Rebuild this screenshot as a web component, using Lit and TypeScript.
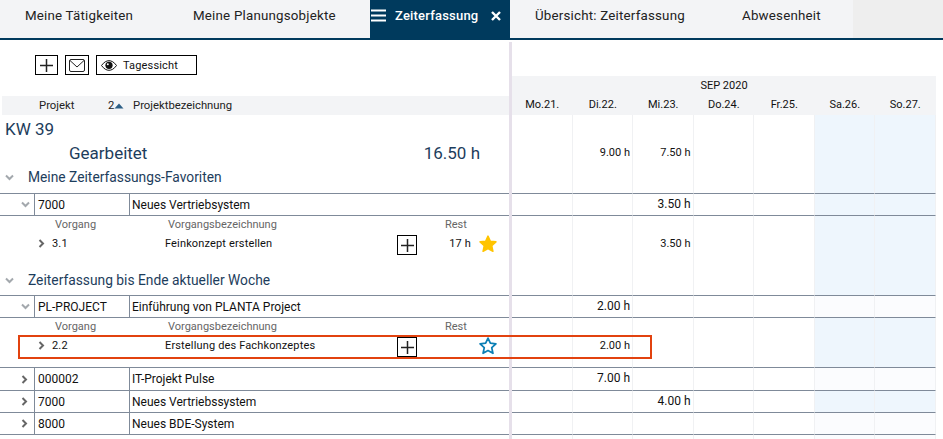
import { LitElement, html, css, svg, nothing } from "lit";
import { customElement } from "lit/decorators.js";
import { classMap } from "lit/directives/class-map.js";

type Row = {
  t: string;
  label?: string;
  code?: string;
  name?: string;
  open?: boolean;
  top?: boolean;
  tall?: boolean;
  pale?: boolean;
  rest?: string;
  star?: "full" | "empty";
  marked?: boolean;
  hours?: Record<number, string>;
};

const TABS = ["Meine Tätigkeiten", "Meine Planungsobjekte", "Zeiterfassung", "Übersicht: Zeiterfassung", "Abwesenheit"];
const DAYS = ["Mo.21.", "Di.22.", "Mi.23.", "Do.24.", "Fr.25.", "Sa.26.", "So.27."];

const ROWS: Row[] = [
  { t: "kw", label: "KW 39" },
  { t: "worked", hours: { 1: "9.00 h", 2: "7.50 h" } },
  { t: "group", label: "Meine Zeiterfassungs-Favoriten" },
  { t: "project", code: "7000", name: "Neues Vertriebsystem", open: true, top: true, hours: { 2: "3.50 h" } },
  { t: "sub" },
  { t: "task", code: "3.1", name: "Feinkonzept erstellen", rest: "17 h", star: "full", hours: { 2: "3.50 h" } },
  { t: "gap-lg" },
  { t: "group", top: true, label: "Zeiterfassung bis Ende aktueller Woche" },
  { t: "project", code: "PL-PROJECT", name: "Einführung von PLANTA Project", open: true, top: true, pale: true, hours: { 1: "2.00 h" } },
  { t: "sub" },
  { t: "task", code: "2.2", name: "Erstellung des Fachkonzeptes", star: "empty", marked: true, hours: { 1: "2.00 h" } },
  { t: "gap-sm" },
  { t: "project", code: "000002", name: "IT-Projekt Pulse", top: true, tall: true, pale: true, hours: { 1: "7.00 h" } },
  { t: "project", code: "7000", name: "Neues Vertriebssystem", hours: { 2: "4.00 h" } },
  { t: "project", code: "8000", name: "Neues BDE-System", pale: true },
];

const chevronDown = svg`<path d="M1 1.5 4.5 5 8 1.5" fill="none" stroke="#a3a8ad" stroke-width="2"/>`;
const chevronRight = svg`<path d="M1.5 1 5 4.5 1.5 8" fill="none" stroke="#666" stroke-width="2"/>`;
const STAR = "M9 1.6 11.2 6.4 16.4 7 12.5 10.6 13.6 15.8 9 13.2 4.4 15.8 5.5 10.6 1.6 7 6.8 6.4Z";

@customElement("app-root")
export class AppRoot extends LitElement {
  static styles = css`
    :host {
      display: block;
      width: 943px;
      height: 439px;
      overflow: hidden;
      background: #fff;
      font-family: Roboto, "Liberation Sans", sans-serif;
      color: #111;
    }
    .tabs {
      display: grid;
      grid-template-columns: 168px 202px 140px 207px 136px 1fr;
      height: 38px;
      border-bottom: 2px solid #003a5d;
      background: #eeeeee;
    }
    .tab {
      display: flex;
      align-items: center;
      padding: 0 0 7px 25px;
      background: #f3f4f6;
      color: #222;
      font-size: 13.33px;
      letter-spacing: 0.2px;
    }
    .tab.active {
      padding-left: 1px;
      background: #003a5d;
      color: #fff;
      font-size: 13px;
      font-weight: 500;
    }
    .tab.active span {
      margin: 0 13px 0 9px;
    }
    .panes {
      display: flex;
      height: 399px;
    }
    .left {
      position: relative;
      width: 509px;
      flex: none;
    }
    .split {
      width: 3px;
      margin-top: 2px;
      flex: none;
      background: #e6e0ea;
    }
    .right {
      width: 424px;
      flex: none;
      display: flex;
      flex-direction: column;
    }
    .toolbar {
      display: flex;
      align-items: flex-start;
      gap: 7px;
      height: 56px;
      padding: 15px 0 0 35px;
      box-sizing: border-box;
    }
    .box {
      display: flex;
      align-items: center;
      justify-content: center;
      box-sizing: border-box;
      border: 1px solid #000;
      background: #fff;
    }
    .toolbar .plus {
      width: 23px;
      height: 20px;
    }
    .toolbar .mail {
      width: 24px;
      height: 20px;
    }
    .toolbar .view {
      justify-content: flex-start;
      width: 101px;
      height: 20px;
      padding-left: 4px;
      gap: 6px;
      font-size: 11px;
      letter-spacing: 0.15px;
    }
    .head {
      display: flex;
      align-items: center;
      height: 19px;
      margin-left: 2px;
      background: #f3f4f6;
      font-size: 11.3px;
      color: #222;
    }
    .head .code {
      width: 69px;
      padding-left: 37px;
      box-sizing: content-box;
    }
    .head .sort {
      display: flex;
      align-items: center;
      width: 25px;
    }
    .month {
      height: 20px;
      margin-top: 36px;
      padding-top: 3px;
      box-sizing: border-box;
      background: #f3f4f6;
      text-align: center;
      font-size: 11px;
    }
    .days {
      display: grid;
      grid-template-columns: repeat(7, 60.5px);
      height: 19px;
      background: #f3f4f6;
      font-size: 11px;
      text-align: center;
      line-height: 17px;
    }

    .kw { height: 27px; }
    .worked { height: 25px; }
    .group { height: 26px; }
    .group.top { height: 25px; }
    .sub { height: 18px; }
    .task { height: 22px; }
    .gap-lg { height: 14px; }
    .gap-sm { height: 9px; }
    .project {
      height: 22px;
      box-sizing: border-box;
      border-bottom: 1px solid #7f8a99;
    }
    .project.top {
      height: 23px;
      border-top: 1px solid #7f8a99;
    }
    .project.tall {
      height: 24px;
    }

    .l {
      position: relative;
    }
    .l.kw {
      padding-left: 5px;
      font-size: 17px;
      line-height: 29px;
      color: #1d3d5c;
    }
    .l.worked {
      display: flex;
      justify-content: space-between;
      padding: 0 29px 0 69px;
      font-size: 17px;
      line-height: 22px;
      color: #1d3d5c;
    }
    .l.group {
      display: flex;
      align-items: flex-start;
      font-size: 13.8px;
      line-height: 21px;
      color: #1d3d5c;
    }
    .l.group svg {
      margin: 7px 14px 0 5px;
    }
    .l.project {
      display: grid;
      grid-template-columns: 21px 13px 95px 1fr;
      align-items: center;
      font-size: 12px;
    }
    .cell-code {
      align-self: stretch;
      display: flex;
      align-items: center;
      padding-left: 3px;
      border-left: 1px solid #7f8a99;
      border-right: 1px solid #7f8a99;
      margin-right: -1px;
    }
    .cell-name {
      padding-left: 3px;
    }
    .l.sub {
      display: grid;
      grid-template-columns: 55px 113px 277px 1fr;
      font-size: 11px;
      line-height: 17px;
      color: #666;
    }
    .l.task {
      display: grid;
      grid-template-columns: 38px 14px 113px 232px 20px 54px 8px 18px;
      align-items: start;
      font-size: 11px;
      line-height: 19px;
      letter-spacing: 0.15px;
    }
    .l.task > svg:first-child {
      grid-column: 2;
      margin-top: 5px;
    }
    .l.task .plus {
      width: 20px;
      height: 20px;
      margin-top: 1px;
    }
    .l.task .rest {
      text-align: right;
    }
    .l.task .star {
      grid-column: 8;
      margin-top: 1px;
    }
    .marker {
      position: absolute;
      left: 18px;
      top: -1px;
      width: 634px;
      height: 24px;
      box-sizing: border-box;
      border: 2px solid #e2420f;
      z-index: 2;
      pointer-events: none;
    }

    .r {
      display: grid;
      grid-template-columns: repeat(7, 60.5px);
    }
    .r.fill {
      flex: 1;
    }
    .c {
      box-sizing: border-box;
      border-right: 1px solid #f0f1f3;
      padding-right: 2px;
      text-align: right;
      font-size: 11px;
    }
    .r.task .c {
      line-height: 19px;
    }
    .r.worked .c {
      line-height: 22px;
    }
    .r.project .c {
      height: inherit;
      border-bottom: 1px solid #7f8a99;
      font-size: 12px;
      line-height: 20px;
    }
    .r.project.top .c {
      border-top: 1px solid #7f8a99;
    }
    .r.project {
      border: 0;
    }
    .c.we {
      background: #eef6fd;
    }
    .r.pale .c.we {
      background: #fbfcfe;
    }
  `;

  private plusIcon() {
    return html`<svg width="13" height="13" viewBox="0 0 13 13"><path d="M6.5 0v13M0 6.5h13" stroke="#222" stroke-width="1.5" fill="none"/></svg>`;
  }

  private leftRow(r: Row) {
    const cls = { l: true, [r.t]: true, top: !!r.top, tall: !!r.tall };
    if (r.t === "kw") return html`<div class=${classMap(cls)}>${r.label}</div>`;
    if (r.t === "worked") return html`<div class=${classMap(cls)}><span>Gearbeitet</span><span>16.50 h</span></div>`;
    if (r.t === "group")
      return html`<div class=${classMap(cls)}>
        <svg width="9" height="7" viewBox="0 0 9 7">${chevronDown}</svg>
        <span>${r.label}</span>
      </div>`;
    if (r.t === "project")
      return html`<div class=${classMap(cls)}>
        <span></span>
        ${r.open
          ? html`<svg width="9" height="7" viewBox="0 0 9 7">${chevronDown}</svg>`
          : html`<svg width="7" height="9" viewBox="0 0 7 9">${chevronRight}</svg>`}
        <div class="cell-code">${r.code}</div>
        <div class="cell-name">${r.name}</div>
      </div>`;
    if (r.t === "sub")
      return html`<div class=${classMap(cls)}><span></span><span>Vorgang</span><span>Vorgangsbezeichnung</span><span>Rest</span></div>`;
    if (r.t === "task")
      return html`<div class=${classMap(cls)}>
        <svg width="7" height="9" viewBox="0 0 7 9">${chevronRight}</svg>
        <span>${r.code}</span>
        <span>${r.name}</span>
        <div class="box plus">${this.plusIcon()}</div>
        <span class="rest">${r.rest ?? ""}</span>
        <svg class="star" width="18" height="18" viewBox="0.6 0.6 16.8 16.8">
          ${r.star === "full"
            ? svg`<path d=${STAR} fill="#ffc400" stroke="#ffc400" stroke-width="1.4" stroke-linejoin="round"/>`
            : svg`<path d=${STAR} fill="none" stroke="#0b7fb5" stroke-width="1.6" stroke-linejoin="round"/>`}
        </svg>
        ${r.marked ? html`<div class="marker"></div>` : nothing}
      </div>`;
    return html`<div class=${r.t}></div>`;
  }

  private rightRow(r: Row) {
    const cls = { r: true, [r.t]: true, top: !!r.top, tall: !!r.tall, pale: !!r.pale };
    return html`<div class=${classMap(cls)}>
      ${DAYS.map((_, i) => html`<div class=${classMap({ c: true, we: i > 4 })}>${r.hours?.[i] ?? ""}</div>`)}
    </div>`;
  }

  render() {
    return html`
      <div class="tabs">
        ${TABS.map((t, i) =>
          i === 2
            ? html`<div class="tab active">
                <svg width="15" height="13" viewBox="0 0 15 13"><path d="M0 1.5h15M0 6.5h15M0 11.5h15" stroke="#fff" stroke-width="2"/></svg>
                <span>${t}</span>
                <svg width="10" height="10" viewBox="0 0 10 10"><path d="M1 1 9 9M9 1 1 9" stroke="#fff" stroke-width="2.4"/></svg>
              </div>`
            : html`<div class="tab">${t}</div>`
        )}
        <div></div>
      </div>
      <div class="panes">
        <section class="left">
          <div class="toolbar">
            <div class="box plus">${this.plusIcon()}</div>
            <div class="box mail">
              <svg width="16" height="13" viewBox="0 0 16 13"><rect x="0.5" y="0.5" width="15" height="12" rx="1.5" fill="none" stroke="#222"/><path d="M1 1.5 8 8 15 1.5" fill="none" stroke="#222"/></svg>
            </div>
            <div class="box view">
              <svg width="16" height="11" viewBox="0 0 16 11">
                <path d="M0.5 5.5C3 2 5.5 0.7 8 0.7S13 2 15.5 5.5C13 9 10.5 10.3 8 10.3S3 9 0.5 5.5Z" fill="none" stroke="#111" stroke-width="1"/>
                <circle cx="8" cy="5.3" r="3.6" fill="#111"/><circle cx="6.8" cy="4.2" r="1" fill="#fff"/>
              </svg>
              <span>Tagessicht</span>
            </div>
          </div>
          <div class="head">
            <span class="code">Projekt</span>
            <span class="sort">2<svg width="10" height="6" viewBox="0 0 10 6"><path d="M5 0.5 9.5 5.5H0.5Z" fill="#2d5f86"/></svg></span>
            <span>Projektbezeichnung</span>
          </div>
          ${ROWS.map((r) => this.leftRow(r))}
        </section>
        <div class="split"></div>
        <section class="right">
          <div class="month">SEP 2020</div>
          <div class="days">${DAYS.map((d) => html`<span>${d}</span>`)}</div>
          ${ROWS.map((r) => this.rightRow(r))}
          ${this.rightRow({ t: "fill", pale: true })}
        </section>
      </div>
    `;
  }
}
